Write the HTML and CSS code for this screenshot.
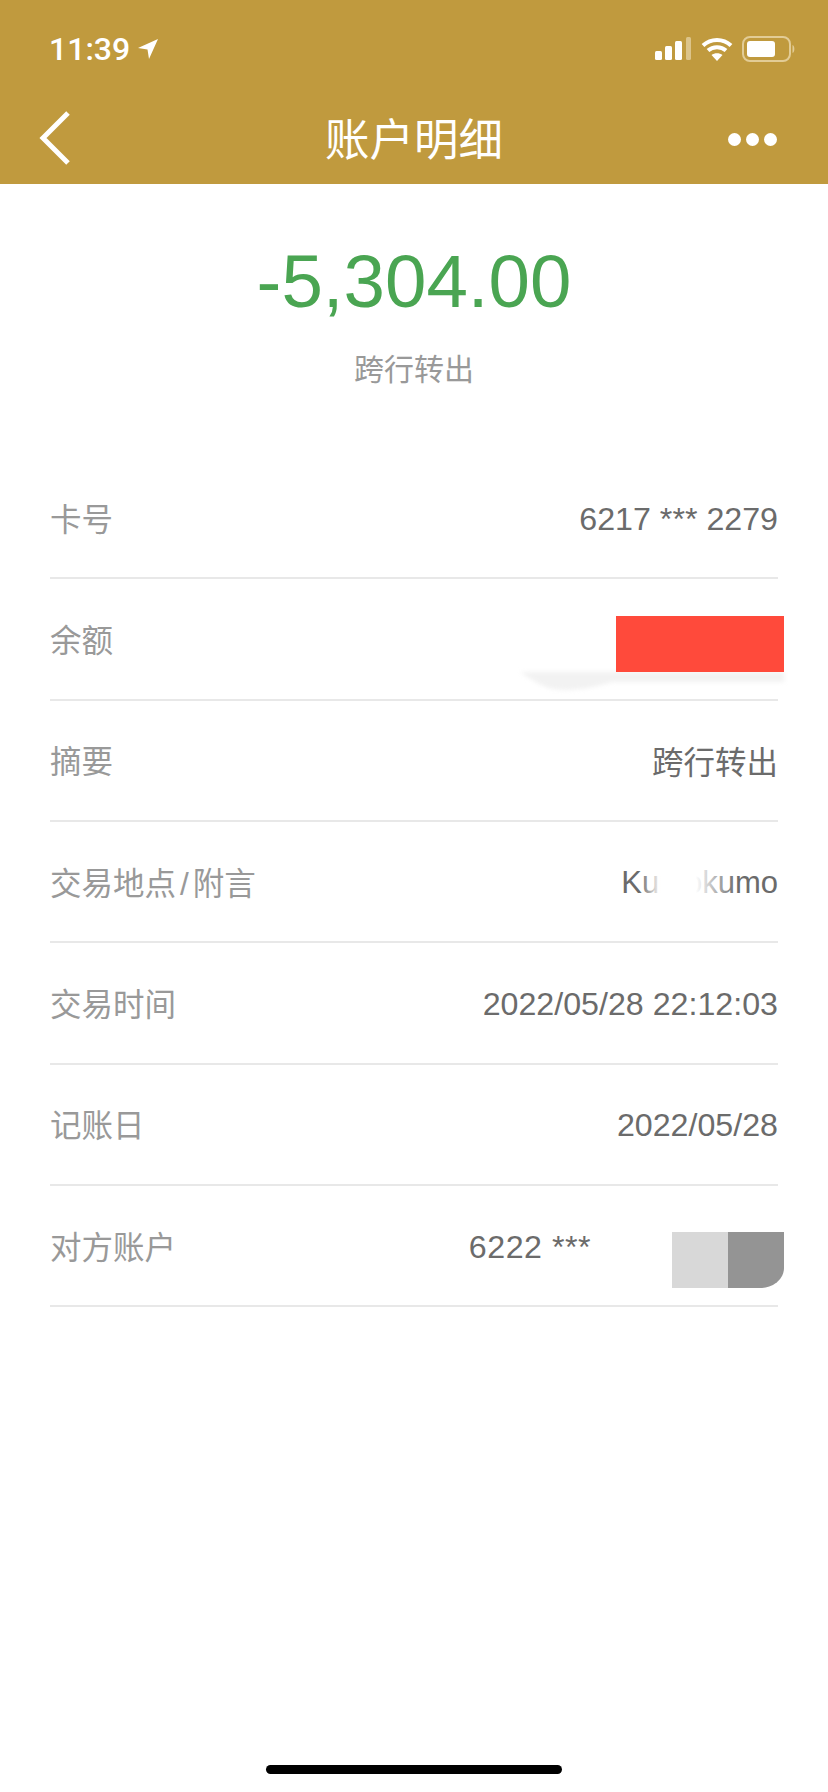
FILE: index.html
```html
<!DOCTYPE html>
<html lang="zh-CN">
<head>
  <meta charset="UTF-8">
  <meta name="viewport" content="width=device-width, initial-scale=1.0">
  <title>账户明细</title>
  <link rel="stylesheet" href="styles.css">
</head>
<body>
  <div class="page">
    <header class="header">
      <div class="status-bar">
        <div class="status-time">
          11:39
          <svg class="location-icon" width="22" height="22" viewBox="0 0 22 22"><path d="M21 1 L1 10 L10.500 11.500 L12 21 Z" fill="#fff"/></svg>
        </div>
        <div class="status-icons">
          <svg width="37" height="26" viewBox="0 0 37 26">
            <rect x="0" y="15" width="7" height="9" rx="1.500" fill="#fff"/>
            <rect x="10" y="10" width="7" height="14" rx="1.500" fill="#fff"/>
            <rect x="20" y="5" width="7" height="19" rx="1.500" fill="#fff"/>
            <rect x="31" y="1" width="5" height="23" rx="1.500" fill="#dcc48a"/>
          </svg>
          <svg width="32" height="26" viewBox="0 0 32 26" fill="none" stroke="#fff" stroke-width="4">
            <path d="M2 9.500 C10 2 22 2 30 9.500"/>
            <path d="M7 14.500 C12 10 20 10 25 14.500"/>
            <path d="M16 25 L10.500 19 C13.500 16.500 18.500 16.500 21.500 19 Z" fill="#fff" stroke="none"/>
          </svg>
          <svg width="54" height="26" viewBox="0 0 54 26">
            <rect x="1" y="1" width="47" height="24" rx="7" fill="none" stroke="#e2cc96" stroke-width="2"/>
            <rect x="5" y="5" width="28" height="16" rx="3" fill="#fff"/>
            <path d="M50.500 9 C53 10 53 16 50.500 17 Z" fill="#e2cc96"/>
          </svg>
        </div>
      </div>
      <nav class="nav-bar">
        <svg class="back-icon" width="32" height="56" viewBox="0 0 32 56" fill="none" stroke="#fff" stroke-width="5"><path d="M29 3 L4 28 L29 53"/></svg>
        <h1 class="nav-title">账户明细</h1>
        <div class="more-icon"><span></span><span></span><span></span></div>
      </nav>
    </header>

    <section class="hero">
      <div class="amount">-5,304.00</div>
      <div class="amount-type">跨行转出</div>
    </section>

    <ul class="detail-list">
      <li class="detail-row"><span class="detail-label">卡号</span><span class="detail-value">6217 *** 2279</span></li>
      <li class="detail-row">
        <span class="detail-label">余额</span>
        <svg class="smudge" width="264" height="24" viewBox="0 0 264 24"><path d="M0 0 H264 V10 H92 C70 17 42 21 26 15 C16 11 8 5 0 0 Z" fill="#f2f2f2"/></svg>
        <div class="mask-red"></div>
      </li>
      <li class="detail-row"><span class="detail-label">摘要</span><span class="detail-value cjk-value">跨行转出</span></li>
      <li class="detail-row">
        <span class="detail-label">交易地点<span class="slash">/</span>附言</span>
        <span class="detail-value name-value">Kumokumo</span>
        <div class="mask-fade"></div>
      </li>
      <li class="detail-row"><span class="detail-label">交易时间</span><span class="detail-value">2022/05/28 22:12:03</span></li>
      <li class="detail-row"><span class="detail-label">记账日</span><span class="detail-value">2022/05/28</span></li>
      <li class="detail-row">
        <span class="detail-label">对方账户</span>
        <span class="detail-value account-value">6222 ***</span>
        <div class="mask-grey"><span class="mask-light"></span><span class="mask-dark"></span></div>
      </li>
    </ul>

    <div class="home-indicator"></div>
  </div>
</body>
</html>
```

FILE: styles.css
```css
* {
  box-sizing: border-box;
}
body {
  margin: 0;
  background-color: #fff;
  font-family: "Liberation Sans", "Noto Sans CJK SC", sans-serif;
}
.page {
  width: 828px;
  height: 1792px;
  display: flex;
  flex-direction: column;
  overflow: hidden;
}
.header {
  height: 184px;
  background-color: #c09a3e;
  color: #fff;
}
.status-bar {
  height: 92px;
  padding: 6px 32px 0 49px;
  display: flex;
  align-items: center;
  justify-content: space-between;
}
.status-time {
  display: flex;
  align-items: center;
  gap: 7px;
  font-family: Roboto, sans-serif;
  font-size: 32px;
  font-weight: 500;
}
.status-icons {
  display: flex;
  align-items: center;
  gap: 9px;
}
.status-icons svg {
  display: block;
}
.nav-bar {
  height: 92px;
  padding: 0 51px 4px;
  display: grid;
  grid-template-columns: 1fr auto 1fr;
  align-items: center;
}
.back-icon {
  display: block;
  margin: 4px 0 0 -12px;
}
.nav-title {
  margin: 0;
  font-size: 44.500px;
  font-weight: 400;
  font-family: "Noto Sans CJK SC", sans-serif;
}
.more-icon {
  display: flex;
  justify-content: flex-end;
  gap: 5px;
  margin-top: 6px;
}
.more-icon span {
  width: 13px;
  height: 13px;
  border-radius: 50%;
  background-color: #fff;
}
.hero {
  height: 274px;
  padding-top: 50px;
  text-align: center;
}
.amount {
  height: 96px;
  line-height: 96px;
  font-size: 74.500px;
  color: #4aa552;
}
.amount-type {
  margin-top: 15px;
  line-height: 44px;
  font-size: 30px;
  color: #999;
  font-family: "Noto Sans CJK SC", sans-serif;
}
.detail-list {
  list-style: none;
  margin: 0 50px;
  padding: 0;
}
.detail-row {
  position: relative;
  height: 121.330px;
  display: flex;
  align-items: center;
  justify-content: space-between;
  border-bottom: 2px solid #e8e8e8;
  font-size: 31.500px;
}
.detail-label {
  padding-bottom: 2px;
  color: #999;
}
.slash {
  margin: 0 4px;
}
.detail-value {
  padding-top: 3px;
  color: #6b6b6b;
  font-size: 32.200px;
}
.cjk-value {
  padding-top: 0;
  font-size: 31.500px;
}
.name-value {
  font-size: 31px;
}
.account-value {
  margin-right: 187px;
  letter-spacing: 0.500px;
}
.mask-red {
  position: absolute;
  top: 37px;
  right: -6px;
  width: 168px;
  height: 56px;
  background-color: #ff4a3b;
}
.smudge {
  position: absolute;
  top: 93px;
  right: -6px;
  display: block;
  filter: blur(2px);
}
.mask-fade {
  position: absolute;
  top: 40px;
  left: 590px;
  width: 96px;
  height: 40px;
  background: linear-gradient(90deg, rgba(255,255,255,0), #fff 22%, #fff 58%, rgba(255,255,255,0));
}
.mask-grey {
  position: absolute;
  top: 46px;
  right: -6px;
  display: flex;
  height: 56px;
}
.mask-light {
  width: 56px;
  background-color: #d8d8d8;
}
.mask-dark {
  width: 56px;
  background-color: #949494;
  border-bottom-right-radius: 24px 20px;
}
.home-indicator {
  width: 296px;
  height: 9px;
  margin: auto auto 18px;
  border-radius: 5px;
  background-color: #000;
}
```
